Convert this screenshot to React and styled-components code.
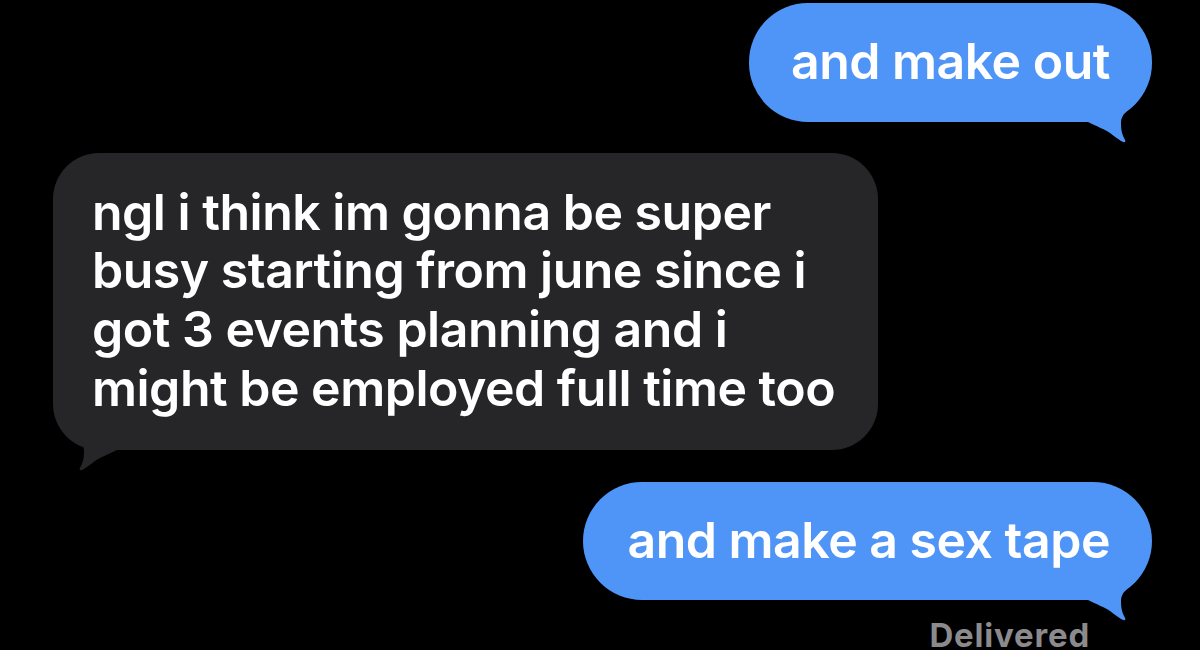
import React from "react";
import styled, { createGlobalStyle } from "styled-components";

const Global = createGlobalStyle`
  html, body {
    margin: 0;
    padding: 0;
    background: #000;
  }
  body {
    width: 1200px;
    height: 650px;
    overflow: hidden;
    font-family: Inter, "Noto Sans", "Liberation Sans", sans-serif;
    -webkit-font-smoothing: antialiased;
  }
`;

const BLUE = "#4f95f7";
const GRAY = "#262628";

const Thread = styled.div`
  display: flex;
  flex-direction: column;
  padding-top: 3px;
  width: 1200px;
  height: 650px;
  box-sizing: border-box;
`;

const Row = styled.div`
  display: flex;
  justify-content: ${(p) => (p.$out ? "flex-end" : "flex-start")};
  padding: ${(p) => (p.$out ? "0 48px 0 0" : "0 0 0 53px")};
  margin-top: ${(p) => p.$gap || 0}px;
`;

const Bubble = styled.div`
  position: relative;
  box-sizing: border-box;
  background: ${(p) => (p.$out ? BLUE : GRAY)};
  color: #fff;
  font-size: 50px;
  font-weight: 600;
  letter-spacing: -0.5px;
  line-height: 58.7px;
  border-radius: ${(p) => (p.$out ? "59px" : "46px")};
  padding: ${(p) => p.$pad};
  white-space: pre-line;
`;

const Tail = styled.svg`
  position: absolute;
  bottom: -22px;
  ${(p) => (p.$out ? "right: 0;" : "left: 0; transform: scaleX(-1);")}
  width: 70px;
  height: 70px;
  overflow: visible;
`;

const Status = styled.div`
  display: flex;
  justify-content: flex-end;
  padding-right: 110px;
  margin-top: 21px;
  color: #8b8b8e;
  font-size: 33px;
  font-weight: 700;
  letter-spacing: 0.8px;
  line-height: 28px;
`;

const TAIL_PATH =
  "M68 0 C67 6 64 14 61 19 C58 24 56 27 54 29 C50 33 46 35 44 38 C40 42 39 45 39 50 C39 56 40 60 42 64 C43 66 44 67 43 68 C41 69 36 65 28 59 C22 55 16 53 6 48 L6 30 L40 0 Z";

function BubbleTail({ out }) {
  return (
    <Tail $out={out} viewBox="0 0 70 70" aria-hidden="true">
      <path d={TAIL_PATH} fill={out ? BLUE : GRAY} />
    </Tail>
  );
}

export default function App() {
  return (
    <>
      <Global />
      <Thread>
        <Row $out>
          <Bubble $out $pad="29px 42px 31px 42px">
            and make out
            <BubbleTail out />
          </Bubble>
        </Row>
        <Row $gap={31}>
          <Bubble $pad="30px 43px 32px 39px">
            {"ngl i think im gonna be super\nbusy starting from june since i\ngot 3 events planning and i\nmight be employed full time too"}
            <BubbleTail />
          </Bubble>
        </Row>
        <Row $out $gap={32}>
          <Bubble $out $pad="29px 42px 31px 44px">
            and make a sex tape
            <BubbleTail out />
          </Bubble>
        </Row>
        <Status>Delivered</Status>
      </Thread>
    </>
  );
}
